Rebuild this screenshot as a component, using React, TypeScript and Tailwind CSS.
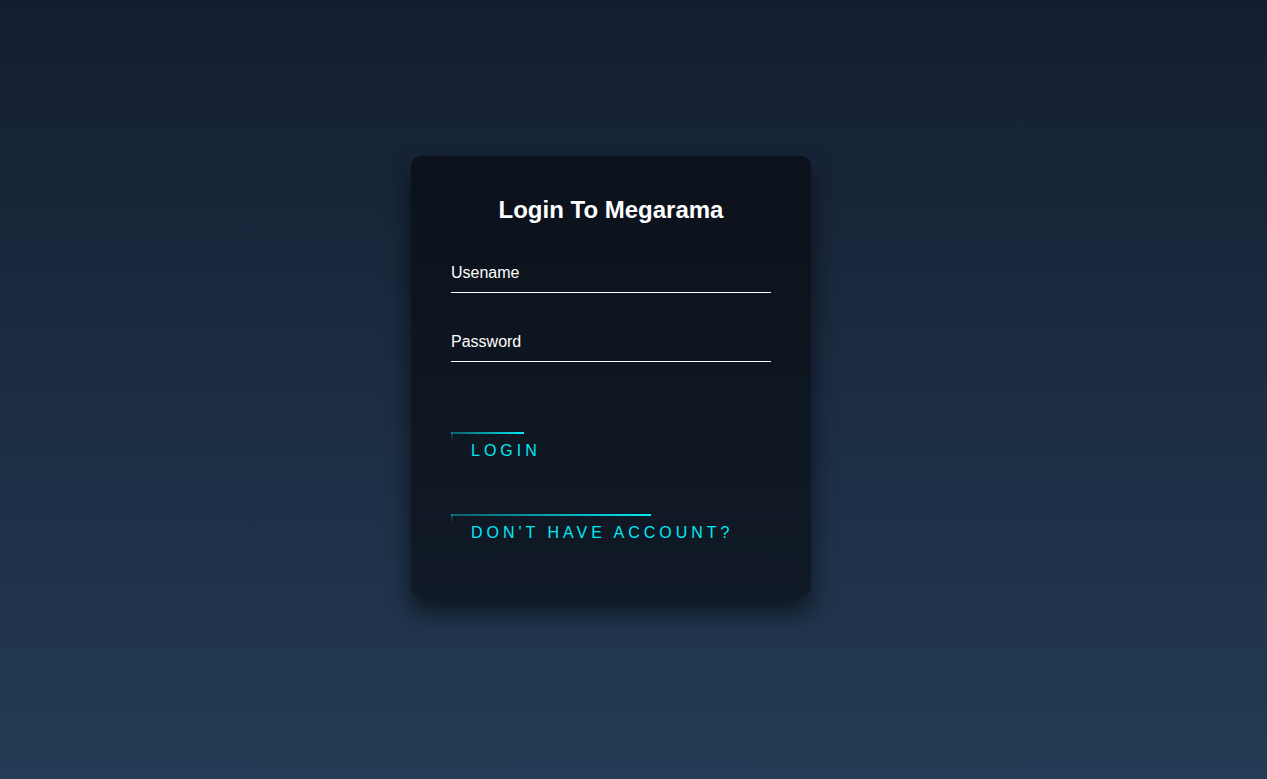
import React from "react";

function NeonLink({ text, bar, mt }: { text: string; bar: number; mt: string }) {
  return (
    <div className={`flex ${mt}`}>
      <a
        href="#"
        className="relative inline-block overflow-hidden px-5 py-[10px] text-[16px] leading-[18px] uppercase tracking-[4px] text-[#03e9f4] no-underline"
      >
        <span
          className="absolute left-0 top-0 h-[2px] bg-linear-to-r from-[rgba(3,233,244,0.34)] to-[#03e9f4]"
          style={{ width: bar }}
        />
        <span className="absolute left-0 top-0 h-[9px] w-[2px] bg-linear-to-t from-[rgba(3,233,244,0)] to-[rgba(3,233,244,0.3)]" />
        {text}
      </a>
    </div>
  );
}

export default function App() {
  return (
    <div
      className="min-h-screen w-full bg-linear-to-b from-[#141e30] to-[#243b55] pl-[411px] pt-[156px]"
      style={{ fontFamily: '"Liberation Sans", Arial, sans-serif' }}
    >
      <div className="w-[400px] rounded-[10px] bg-black/50 px-10 pt-10 pb-[45px] shadow-[0_15px_25px_rgba(0,0,0,0.6)]">
        <h2 className="mb-[30px] text-center text-[24px] font-bold leading-[28px] text-white">
          Login To Megarama
        </h2>
        <div className="mb-[30px] border-b border-white py-[10px] text-[16px] leading-[18px] text-white">
          Usename
        </div>
        <div className="border-b border-white py-[10px] text-[16px] leading-[18px] text-white">
          Password
        </div>
        <NeonLink text="Login" bar={73} mt="mt-[70px]" />
        <NeonLink text="Don't have account?" bar={200} mt="mt-[44px]" />
      </div>
    </div>
  );
}
